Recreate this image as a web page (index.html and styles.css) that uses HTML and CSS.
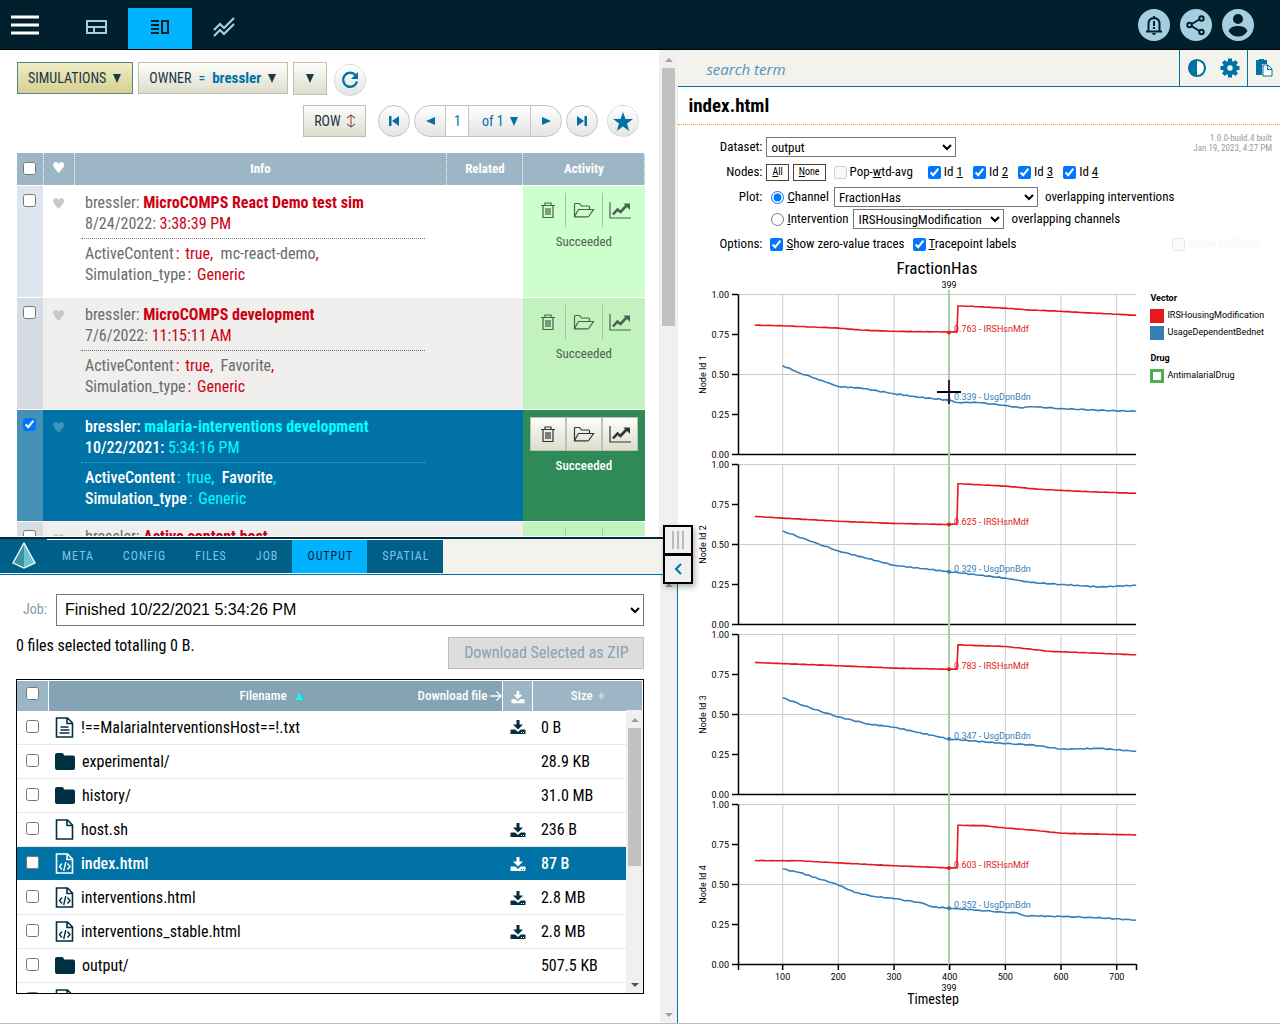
FILE: index.html
```
<!DOCTYPE html>
<html lang="en">
<head>
<meta charset="utf-8">
<title>Simulations</title>
<link rel="stylesheet" href="styles.css">
</head>
<body>
<svg class="sprite" aria-hidden="true">
  <symbol id="i-trash" viewBox="0 0 16 18"><path d="M1 4.500h14M5 4V2h6v2M3 4.500v12h10v-12M6 7v7M8 7v7M10 7v7" fill="none" stroke="currentColor" stroke-width="1.200"/></symbol>
  <symbol id="i-folder" viewBox="0 0 22 16"><path d="M1.500 14.500V2.500q0-1 1-1h4l2 2.500h7q1 0 1 1v2.500M1.500 14.500l4-7h15l-4.500 6.500q-.5.800-1.500.800h-12q-1 0-1-.8z" fill="none" stroke="currentColor" stroke-width="1.200"/></symbol>
  <symbol id="i-trend" viewBox="0 0 22 18"><path d="M1 1v16h21" fill="none" stroke="currentColor" stroke-width="1.200"/><path d="M4 13.500l4.500-5 3 2.500 6-6.500" fill="none" stroke="currentColor" stroke-width="2.600"/><path d="M14.500 2.500H21V9z" fill="currentColor"/></symbol>
  <symbol id="i-down" viewBox="0 0 16 16"><path d="M6.500 1h3v4.500H13L8 10.500 3 5.500h3.500z" fill="currentColor"/><path d="M1 10.500h4.200L8 13l2.800-2.500H15q.5 0 .5.500v3.500q0 .5-.5.500H1q-.5 0-.5-.5V11q0-.5.500-.5zM11 13h1v1h-1zm2 0h1v1h-1z" fill="currentColor" fill-rule="evenodd"/></symbol>
  <symbol id="i-dir" viewBox="0 0 20 17"><path d="M2 0h5q1 0 1.500 1l.6 1.500H18q2 0 2 2V15q0 2-2 2H2q-2 0-2-2V2q0-2 2-2z" fill="currentColor"/></symbol>
  <symbol id="i-file" viewBox="0 0 18 21"><path d="M1 1h11l5 5v14H1zM11.500 1v5.500H17" fill="none" stroke="currentColor" stroke-width="1.600"/></symbol>
  <symbol id="i-text" viewBox="0 0 18 21"><path d="M1 1h11l5 5v14H1zM11.500 1v5.500H17" fill="none" stroke="currentColor" stroke-width="1.600"/><path d="M5 10h8M5 13h9M4 16h10" stroke="currentColor" stroke-width="1.400"/></symbol>
  <symbol id="i-code" viewBox="0 0 18 21"><path d="M1 1h11l5 5v14H1zM11.500 1v5.500H17" fill="none" stroke="currentColor" stroke-width="1.600"/><path d="M6.500 10.500L4 13.500l2.500 3M12 10.500l2.500 3-2.500 3M10.300 9L8.200 18" fill="none" stroke="currentColor" stroke-width="1.400"/></symbol>
</svg>

<header class="topbar">
  <button class="menu" aria-label="Menu"><svg width="28" height="20" viewBox="0 0 28 20"><path d="M0 2h28M0 10h28M0 18h28" stroke="#fff" stroke-width="3"/></svg></button>
  <nav class="views">
    <a href="#" aria-label="Dashboard"><svg width="22" height="16" viewBox="0 0 22 16"><path d="M2 2h19v12H2zM2 8h19M9 8v6" fill="none" stroke="#a5cfe0" stroke-width="2"/></svg></a>
    <a href="#" class="on" aria-label="Split view"><svg width="20" height="16" viewBox="0 0 20 16"><path d="M1 2h8M1 6h8M1 10h8M1 14h8M12 2h6v12h-6z" fill="none" stroke="#00202d" stroke-width="2"/></svg></a>
    <a href="#" aria-label="Charts"><svg width="22" height="20" viewBox="0 0 22 20"><path d="M1 13l6-6 4 4 10-10M1 19l6-6 4 4 10-10" fill="none" stroke="#a5cfe0" stroke-width="2.200"/></svg></a>
  </nav>
  <div class="user">
    <button aria-label="Alerts"><svg width="32" height="32" viewBox="0 0 32 32"><path d="M10.500 21.500v-7q0-5 5.500-5.500 5.500.5 5.500 5.500v7M8 22.500h16M16 7v3" fill="none" stroke="#00202d" stroke-width="2"/><path d="M14 24h4q-.5 2-2 2t-2-2zM15 12h2v5h-2zm0 6h2v2h-2z" fill="#00202d"/></svg></button>
    <button aria-label="Share"><svg width="32" height="32" viewBox="0 0 32 32"><path d="M21 9.500L10 16l11 7" fill="none" stroke="#00202d" stroke-width="2"/><g fill="#a5cfe0" stroke="#00202d" stroke-width="2"><circle cx="21.500" cy="9.500" r="2.200"/><circle cx="9.500" cy="16" r="2.200"/><circle cx="21.500" cy="23" r="2.200"/></g></svg></button>
    <button aria-label="Account"><svg width="32" height="32" viewBox="0 0 32 32"><circle cx="16" cy="10" r="5" fill="#00202d"/><path d="M6.500 22q2-5 9.500-5t9.500 5q-3.500 5.500-9.500 5.500T6.500 22z" fill="#00202d"/></svg></button>
  </div>
</header>

<main class="work">
  <div class="left">
    <section class="sims">
      <div class="sims-body">
        <div class="bar">
          <button class="btn gold">SIMULATIONS <i class="tri"></i></button>
          <button class="btn">OWNER <span class="eq">=</span> <b>bressler</b> <i class="tri"></i></button>
          <button class="btn more" aria-label="More filters"><i class="tri"></i></button>
          <button class="round dashed" aria-label="Refresh"><svg width="18" height="18" viewBox="0 0 18 18"><path d="M14.500 4.200A7 7 0 1 0 16 10.500" fill="none" stroke="#0072a5" stroke-width="2.400"/><path d="M17 1v7h-7z" fill="#0072a5"/></svg></button>
        </div>
        <div class="bar pager">
          <button class="btn row-btn">ROW <svg width="10" height="14" viewBox="0 0 10 14"><path d="M5 1v12" stroke="#a33"/><path d="M1 4l4-3 4 3M1 10l4 3 4-3" fill="none" stroke="#334"/></svg></button>
          <button class="round" aria-label="First page"><svg width="12" height="10" viewBox="0 0 12 10"><path d="M1 0h2.500v10H1zM11 0v10L4 5z" fill="#0072a5"/></svg></button>
          <div class="pages">
            <button aria-label="Previous page"><svg width="9" height="8" viewBox="0 0 9 8"><path d="M9 0v8L0 4z" fill="#0072a5"/></svg></button>
            <input value="1" aria-label="Page">
            <button class="of">of 1 <i class="tri"></i></button>
            <button aria-label="Next page"><svg width="9" height="8" viewBox="0 0 9 8"><path d="M0 0v8l9-4z" fill="#0072a5"/></svg></button>
          </div>
          <button class="round" aria-label="Last page"><svg width="12" height="10" viewBox="0 0 12 10"><path d="M11 0H8.500v10H11zM1 0v10l7-5z" fill="#0072a5"/></svg></button>
          <button class="round dashed star" aria-label="Favorites"><svg width="20" height="19" viewBox="0 0 20 19"><path d="M10 0l2.500 7H20l-6 4.400L16.200 19 10 14.500 3.800 19 6 11.400 0 7h7.500z" fill="#0072a5"/></svg></button>
        </div>
        <table class="list">
          <colgroup><col class="c-check"><col class="c-heart"><col><col class="c-rel"><col class="c-act"></colgroup>
          <thead><tr><th><input type="checkbox" aria-label="Select all"></th><th class="heart">♥</th><th>Info</th><th>Related</th><th>Activity</th></tr></thead>
          <tbody>
            <tr>
              <td><input type="checkbox" aria-label="Select"></td><td class="heart">♥</td>
              <td colspan="2" class="info"><p>bressler: <b>MicroCOMPS React Demo test sim</b><br>8/24/2022: <em>3:38:39 PM</em></p><p class="tags">ActiveContent<em class="colon">:</em> <em>true,</em>  mc-react-demo<em>,</em><br>Simulation_type<em class="colon">:</em> <em>Generic</em></p></td>
              <td class="act"><div class="tools"><button aria-label="Delete"><svg width="16" height="18"><use href="#i-trash"/></svg></button><button aria-label="Open"><svg width="22" height="16"><use href="#i-folder"/></svg></button><button aria-label="Chart"><svg width="22" height="18"><use href="#i-trend"/></svg></button></div>Succeeded</td>
            </tr>
            <tr class="odd">
              <td><input type="checkbox" aria-label="Select"></td><td class="heart">♥</td>
              <td colspan="2" class="info"><p>bressler: <b>MicroCOMPS development</b><br>7/6/2022: <em>11:15:11 AM</em></p><p class="tags">ActiveContent<em class="colon">:</em> <em>true,</em>  Favorite<em>,</em><br>Simulation_type<em class="colon">:</em> <em>Generic</em></p></td>
              <td class="act"><div class="tools"><button aria-label="Delete"><svg width="16" height="18"><use href="#i-trash"/></svg></button><button aria-label="Open"><svg width="22" height="16"><use href="#i-folder"/></svg></button><button aria-label="Chart"><svg width="22" height="18"><use href="#i-trend"/></svg></button></div>Succeeded</td>
            </tr>
            <tr class="sel">
              <td><input type="checkbox" aria-label="Select" checked></td><td class="heart">♥</td>
              <td colspan="2" class="info"><p>bressler: <b>malaria-interventions development</b><br>10/22/2021: <em>5:34:16 PM</em></p><p class="tags">ActiveContent<em class="colon">:</em> <em>true,</em>  Favorite<em>,</em><br>Simulation_type<em class="colon">:</em> <em>Generic</em></p></td>
              <td class="act"><div class="tools"><button aria-label="Delete"><svg width="16" height="18"><use href="#i-trash"/></svg></button><button aria-label="Open"><svg width="22" height="16"><use href="#i-folder"/></svg></button><button aria-label="Chart"><svg width="22" height="18"><use href="#i-trend"/></svg></button></div>Succeeded</td>
            </tr>
            <tr class="odd">
              <td><input type="checkbox" aria-label="Select"></td><td class="heart">♥</td>
              <td colspan="2" class="info"><p>bressler: <b>Active content host</b></p></td>
              <td class="act"><div class="tools"><button aria-label="Delete"><svg width="16" height="18"><use href="#i-trash"/></svg></button><button aria-label="Open"><svg width="22" height="16"><use href="#i-folder"/></svg></button><button aria-label="Chart"><svg width="22" height="18"><use href="#i-trend"/></svg></button></div></td>
            </tr>
          </tbody>
        </table>
      </div>
      <div class="scroll"><i class="up"></i><i class="thumb tall"></i></div>
    </section>

    <nav class="tabs">
      <a href="#" class="logo" aria-label="Home"><svg width="24" height="28" viewBox="0 0 24 28"><path d="M12 1L1 21l11 5z" fill="#3f929d"/><path d="M12 1l11 20-11 5z" fill="#6cc4d2"/><path d="M12 1L1 21l11 5 11-5z" fill="none" stroke="#fff" stroke-width="1.300"/></svg></a>
      <a href="#">META</a><a href="#">CONFIG</a><a href="#">FILES</a><a href="#">JOB</a><a href="#" class="on">OUTPUT</a><a href="#">SPATIAL</a>
    </nav>

    <section class="detail">
      <div class="detail-body">
        <div class="job"><label for="job">Job:</label><select id="job"><option>Finished 10/22/2021 5:34:26 PM</option></select></div>
        <div class="sum"><span>0 files selected totalling 0 B.</span><button disabled>Download Selected as ZIP</button></div>
        <div class="files">
          <table>
            <colgroup><col class="f-check"><col><col class="f-down"><col class="f-size"></colgroup>
            <thead><tr><th><input type="checkbox" aria-label="Select all files"></th><th class="name"><div><span>Filename <i>▲</i></span><span>Download file <svg width="12" height="10" viewBox="0 0 12 10"><path d="M0 5h11M6.500 .5L11 5 6.500 9.500" fill="none" stroke="#fff" stroke-width="1.300"/></svg></span></div></th><th><svg width="14" height="14"><use href="#i-down"/></svg></th><th>Size <i class="dia">♦</i></th></tr></thead>
            <tbody>
              <tr><td><input type="checkbox" aria-label="Select file"></td><td><svg width="19" height="21"><use href="#i-text"/></svg>!==MalariaInterventionsHost==!.txt</td><td><svg width="16" height="16"><use href="#i-down"/></svg></td><td>0 B</td></tr>
              <tr><td><input type="checkbox" aria-label="Select file"></td><td><svg width="20" height="17"><use href="#i-dir"/></svg>experimental/</td><td></td><td>28.9 KB</td></tr>
              <tr><td><input type="checkbox" aria-label="Select file"></td><td><svg width="20" height="17"><use href="#i-dir"/></svg>history/</td><td></td><td>31.0 MB</td></tr>
              <tr><td><input type="checkbox" aria-label="Select file"></td><td><svg width="19" height="21"><use href="#i-file"/></svg>host.sh</td><td><svg width="16" height="16"><use href="#i-down"/></svg></td><td>236 B</td></tr>
              <tr class="sel"><td><input type="checkbox" aria-label="Select file"></td><td><svg width="19" height="21"><use href="#i-code"/></svg>index.html</td><td><svg width="16" height="16"><use href="#i-down"/></svg></td><td>87 B</td></tr>
              <tr><td><input type="checkbox" aria-label="Select file"></td><td><svg width="19" height="21"><use href="#i-code"/></svg>interventions.html</td><td><svg width="16" height="16"><use href="#i-down"/></svg></td><td>2.8 MB</td></tr>
              <tr><td><input type="checkbox" aria-label="Select file"></td><td><svg width="19" height="21"><use href="#i-code"/></svg>interventions_stable.html</td><td><svg width="16" height="16"><use href="#i-down"/></svg></td><td>2.8 MB</td></tr>
              <tr><td><input type="checkbox" aria-label="Select file"></td><td><svg width="20" height="17"><use href="#i-dir"/></svg>output/</td><td></td><td>507.5 KB</td></tr>
              <tr><td><input type="checkbox" aria-label="Select file"></td><td><svg width="19" height="21"><use href="#i-text"/></svg>stderr.txt</td><td><svg width="16" height="16"><use href="#i-down"/></svg></td><td>0 B</td></tr>
            </tbody>
          </table>
          <div class="scroll over"><i class="up"></i><i class="thumb short"></i><i class="down dark"></i></div>
        </div>
      </div>
      <div class="scroll"><i class="up"></i><i class="down"></i></div>
    </section>
    <div class="split"><button aria-label="Drag to resize"><svg width="14" height="18" viewBox="0 0 14 18"><path d="M2 0v18M7 0v18M12 0v18" stroke="#bbb" stroke-width="2"/></svg></button><button aria-label="Collapse"><svg width="8" height="12" viewBox="0 0 8 12"><path d="M7 1L2 6l5 5" fill="none" stroke="#0072a5" stroke-width="2"/></svg></button></div>
  </div>

  <section class="right">
    <div class="search">
      <input type="text" placeholder="search term" aria-label="Search term">
      <div class="icons"><button aria-label="Contrast"><svg width="20" height="20" viewBox="0 0 20 20"><circle cx="10" cy="10" r="8" fill="#fff" stroke="#0072a5" stroke-width="2.200"/><path d="M10 2a8 8 0 0 0 0 16z" fill="#0072a5"/></svg></button><button aria-label="Settings"><svg width="20" height="20" viewBox="0 0 20 20"><circle cx="10" cy="10" r="5" fill="none" stroke="#0072a5" stroke-width="4.500"/><path d="M10 .5v4M10 15.500v4M.5 10h4M15.500 10h4M3.300 3.300l2.500 2.500M14.200 14.200l2.500 2.500M3.300 16.700l2.500-2.500M14.200 5.800l2.500-2.500" stroke="#0072a5" stroke-width="4"/></svg></button></div>
      <div class="icons clip"><button aria-label="Copy"><svg width="18" height="20" viewBox="0 0 18 20"><path d="M1 2h3V1h5v1h3v4H7v11H1z" fill="#0072a5"/><path d="M8 7h5l4 4v7H8zM12.500 7v4.500H17" fill="#fff" stroke="#0072a5"/></svg></button></div>
    </div>
    <h1>index.html</h1>
    <div class="form">
      <p class="build">1.0.0-build.4 built<br>Jan 19, 2023, 4:27 PM</p>
      <div class="line"><label class="lab" for="ds">Dataset:</label><select id="ds" class="w-ds"><option>output</option></select></div>
      <div class="line"><span class="lab">Nodes:</span><button><span><u>A</u>ll</span></button><button><span><u>N</u>one</span></button><label class="pop"><input type="checkbox" disabled><span>Pop-<u>w</u>td-avg</span></label><label class="id"><input type="checkbox" checked><span>Id <u>1</u></span></label><label class="id"><input type="checkbox" checked><span>Id <u>2</u></span></label><label class="id"><input type="checkbox" checked><span>Id <u>3</u></span></label><label class="id"><input type="checkbox" checked><span>Id <u>4</u></span></label></div>
      <div class="line tight"><span class="lab">Plot:</span><label><input type="radio" name="plot" checked><span><u>C</u>hannel</span></label><select class="w-ch" aria-label="Channel"><option>FractionHas</option></select><span>overlapping interventions</span></div>
      <div class="line"><span class="lab"></span><label><input type="radio" name="plot"><span><u>I</u>ntervention</span></label><select class="w-iv" aria-label="Intervention"><option>IRSHousingModification</option></select><span>overlapping channels</span></div>
      <div class="line tight"><span class="lab">Options:</span><label><input type="checkbox" checked><span><u>S</u>how zero-value traces</span></label><label><input type="checkbox" checked><span><u>T</u>racepoint labels</span></label><label class="faint"><input type="checkbox" disabled><span>Show <u>r</u>edlines</span></label></div>
    </div>
    <div class="plot">
      <svg id="chart" width="460" height="750" viewBox="0 0 460 750" role="img" aria-label="FractionHas by timestep"></svg>
      <div class="legend">
        <h2>Vector</h2>
        <p><i class="red"></i>IRSHousingModification</p>
        <p><i class="blue"></i>UsageDependentBednet</p>
        <h2>Drug</h2>
        <p><i class="green"></i>AntimalarialDrug</p>
      </div>
    </div>
  </section>
</main>
<script src="chart.js"></script>
</body>
</html>
```
FILE: chart.js
```
const nodes = [
  { red: [[50,.808],[100,.805],[150,.797],[200,.79],[240,.778],[300,.77],[413,.765],[415,.928],[435,.926],[500,.915],[540,.904],[600,.895],[640,.887],[700,.877],[735,.87]],
    blue: [[100,.555],[130,.51],[160,.475],[200,.425],[240,.415],[300,.38],[340,.36],[399,.339],[415,.325],[450,.325],[500,.307],[525,.293],[550,.298],[600,.287],[680,.275],[735,.27]],
    at: [.763, .339] },
  { red: [[50,.675],[100,.665],[200,.645],[300,.632],[399,.625],[413,.63],[415,.88],[500,.865],[560,.845],[650,.83],[735,.82]],
    blue: [[100,.585],[150,.52],[200,.46],[300,.37],[399,.33],[500,.29],[545,.263],[600,.25],[670,.235],[735,.245]],
    at: [.625, .329] },
  { red: [[50,.825],[200,.805],[300,.79],[399,.783],[413,.783],[415,.935],[500,.925],[580,.895],[735,.873]],
    blue: [[100,.605],[150,.54],[200,.485],[255,.44],[300,.42],[399,.347],[500,.318],[550,.31],[600,.283],[670,.288],[735,.27]],
    at: [.783, .347] },
  { red: [[50,.65],[130,.648],[200,.635],[300,.617],[399,.604],[413,.603],[415,.87],[460,.868],[500,.853],[550,.84],[600,.82],[735,.81]],
    blue: [[100,.597],[130,.575],[170,.53],[195,.505],[230,.45],[265,.425],[300,.412],[350,.385],[370,.36],[399,.352],[450,.34],[500,.325],[520,.323],[535,.305],[600,.3],[650,.295],[735,.278]],
    at: [.603, .352] }
];
const RED = '#e41a1c', BLUE = '#377eb8';
const X = t => 49 + t * 0.5567;
const Y = (n, v) => 38.5 + n * 170 + (1 - v) * 160;
let out = '';
const line = (x1, y1, x2, y2, c, w) => { out += `<line x1="${x1}" y1="${y1}" x2="${x2}" y2="${y2}" stroke="${c}" stroke-width="${w}"/>`; };
const text = (x, y, s, cls, extra = '') => { out += `<text x="${x}" y="${y}" class="${cls}" ${extra}>${s}</text>`; };

// Points are resampled so that the trace has the small steps of a stochastic run.
function trace(n, pts, color, amp) {
  let d = '';
  for (let k = 0; k < pts.length - 1; k++) {
    const [a, va] = pts[k], [b, vb] = pts[k + 1];
    const steps = Math.max(1, Math.round((b - a) / 6));
    for (let s = 0; s < steps; s++) {
      const t = a + (b - a) * s / steps;
      const v = va + (vb - va) * s / steps + (s ? amp * Math.sin(t * 1.7 + n) : 0);
      d += `${d ? 'L' : 'M'}${X(t).toFixed(1)} ${Y(n, v).toFixed(1)}`;
    }
  }
  const [t, v] = pts[pts.length - 1];
  d += `L${X(t).toFixed(1)} ${Y(n, v).toFixed(1)}`;
  out += `<path d="${d}" fill="none" stroke="${color}" stroke-width="1.6"/>`;
}

text(259, 18, 'FractionHas', 'big mid');
text(271, 32, '399', 'tick mid');
nodes.forEach((node, n) => {
  for (let t = 100; t <= 700; t += 100) line(X(t), Y(n, 1), X(t), Y(n, 0), '#ccc', 1);
  line(60, Y(n, 1), 458, Y(n, 1), '#ccc', 1);
  line(60, Y(n, .5), 458, Y(n, .5), '#ccc', 1);
  line(60, Y(n, 0), 458, Y(n, 0), '#000', 1.5);
  line(60.5, Y(n, 1), 60.5, Y(n, 0), '#000', 1.5);
  [1, .75, .5, .25, 0].forEach(v => {
    line(54, Y(n, v), 60, Y(n, v), '#000', 1.5);
    text(51, Y(n, v) + 3, v.toFixed(2), 'tick end');
  });
  text(0, 0, `Node Id ${n + 1}`, 'tick mid', `transform="translate(28 ${Y(n, .5)}) rotate(-90)"`);
});
line(271, 34, 271, 714, '#a9d3a7', 2);
nodes.forEach((node, n) => {
  trace(n, node.red, RED, .001);
  trace(n, node.blue, BLUE, .003);
  [[node.at[0], RED, 'IRSHsnMdf'], [node.at[1], BLUE, 'UsgDpnBdn']].forEach(([v, c, name]) => {
    out += `<circle cx="271" cy="${Y(n, v)}" r="2" fill="${c}"/>`;
    text(276, Y(n, v), `${v.toFixed(3)} - ${name}`, 'tick', `fill="${c}"`);
  });
});
line(60.5, 708, 60.5, 714, '#000', 1.5);
line(458.5, 708, 458.5, 714, '#000', 1.5);
for (let t = 100; t <= 700; t += 100) {
  line(X(t), 708, X(t), 714, '#000', 1.5);
  text(X(t), 724, t, 'tick mid');
}
text(271, 735, '399', 'tick mid');
text(255, 748, 'Timestep', 'axis mid');
line(271, 124, 271, 148, '#3a2140', 2);
line(259, 136, 283, 136, '#000', 2);
document.getElementById('chart').innerHTML = out;
```
FILE: styles.css
```
* { box-sizing: border-box; }
body {
  margin: 0;
  height: 100vh;
  display: flex;
  flex-direction: column;
  overflow: hidden;
  background: #fff;
  border-bottom: 1px solid #b9c0c4;
  font: 16px/21px "Roboto Condensed", "Liberation Sans Narrow", Roboto, sans-serif;
  color: #000;
}
button, input, select { font: inherit; margin: 0; }
button { padding: 0; border: 0; background: none; color: inherit; display: inline-flex; align-items: center; justify-content: center; }
input[type=checkbox], input[type=radio] { width: 13px; height: 13px; flex: none; }
i, em { font-style: normal; }
p { margin: 0; }
a { text-decoration: none; }
.sprite { position: absolute; width: 0; height: 0; }

.topbar { flex: none; height: 50px; display: flex; background: #00202d; border-bottom: 1px solid #000; }
.menu { width: 50px; }
.views { display: flex; margin-left: 14px; padding-top: 8px; }
.views a { width: 64px; display: flex; align-items: center; justify-content: center; padding-bottom: 4px; }
.views .on { background: #00b3ff; }
.user { margin-left: auto; display: flex; align-items: center; gap: 10px; padding-right: 26px; }
.user button { width: 32px; height: 32px; border-radius: 50%; background: #a5cfe0; }

.work { flex: 1; min-height: 0; display: flex; }
.left { flex: 0 0 53%; display: flex; flex-direction: column; position: relative; min-width: 0; }
.sims { flex: 0 0 50%; min-height: 0; display: flex; padding-bottom: 1px; }
.sims-body { flex: 1; padding: 12px 14px 0 17px; overflow: hidden; }

.scroll { flex: 0 0 18px; padding: 4px 3px; background: #f0f0f0; display: flex; flex-direction: column; align-items: center; }
.scroll .up, .scroll .down { border: 4px solid transparent; }
.scroll .up { border-bottom-color: #a0a0a0; border-top: 0; margin: 4px 0 6px; }
.scroll .down { border-top-color: #a0a0a0; border-bottom: 0; margin-top: auto; margin-bottom: 2px; }
.scroll .dark { border-top-color: #505050; }
.thumb { width: 13px; background: #c1c1c1; }
.tall { height: 258px; }
.short { height: 138px; }

.bar { display: flex; gap: 5px; align-items: flex-start; }
.btn {
  height: 32px; padding: 0 11px 0 10px; gap: 7px;
  font-size: 14px; color: #1c3648;
  background: linear-gradient(#fdfdfb, #deddcd); border: 1px solid #bfbfb2;
}
.btn b, .btn .eq { color: #0072a5; }
.btn b { font-size: 15px; }
.tri { border: 4px solid transparent; border-top: 9px solid currentColor; border-bottom: 0; }
.gold { background: linear-gradient(#efedc3, #d6d093); border-color: #5c7f8a; }
.more { width: 34px; height: 33px; padding: 0; }
.round { width: 32px; height: 32px; border-radius: 50%; border: 1px solid #c4c4c4; background: linear-gradient(#fff, #e4e4e4); }
.bar > .dashed { border-style: dotted; margin: 2px 0 0 2px; }
.pager { justify-content: flex-end; gap: 4px; padding: 9px 6px 0 0; }
.pager .row-btn { margin-right: 8px; width: 63px; padding: 0; gap: 5px; }
.pager > .star { margin: 0 0 0 5px; }
.pages { display: flex; width: 148px; height: 32px; border: 1px solid #c4c4c4; border-radius: 16px; overflow: hidden; background: linear-gradient(#fff, #e4e4e4); }
.pages button { flex: 1; color: #0072a5; font-size: 14px; gap: 6px; }
.pages .of { flex: 0 0 62px; border-right: 1px solid #c4c4c4; }
.pages input { width: 24px; border: solid #c4c4c4; border-width: 0 1px; background: #fff; color: #0072a5; font-size: 14px; text-align: center; padding: 0; }

table { border-collapse: collapse; table-layout: fixed; width: 100%; }
td, th { padding: 0; }
.list { margin-top: 16px; }
.c-check { width: 26px; } .c-heart { width: 31px; } .c-rel { width: 76px; } .c-act { width: 122px; }
.list th { height: 32px; background: #9cb6c5; color: #fff; font-size: 13px; font-weight: 700; border-right: 1px dotted #fff; border-bottom: 1px solid #fff; }
.list input { display: block; margin: 0 auto; }
.list td { height: 112px; vertical-align: top; border-bottom: 1px solid #fff; color: #6b6b6b; }
.list td:first-child { background: #dde6ee; padding: 8px 1px 0 0; }
.heart { font-family: "DejaVu Sans", sans-serif; text-align: center; }
.list .heart { font-size: 15px; }
.list td.heart { color: #c8c8c8; padding-top: 8px; }
.info p { margin-right: 98px; margin-left: 7px; padding: 6px 0 4px 4px; border-bottom: 1px dotted #777; }
.info p:last-child { border: 0; padding-top: 4px; white-space: pre-wrap; }
.info b, .info em { color: #cc0011; }
.info .colon { margin: 0 2px; }
.list .act { background: #ccffcc; text-align: center; font-size: 13px; padding: 7px 7px 0; color: #4d6350; }
.tools { display: flex; height: 34px; margin-bottom: 4px; color: #4b604e; }
.tools button { flex: 1; border-right: 1px solid #9fc49f; }
.tools button:last-child { border: 0; }
.odd td { background: #f0efee; }
.list .odd td:first-child { background: #d5dce4; }
.list .odd .act { background: #c2f3be; }
.list .sel td { background: #0072a5; color: #fff; font-weight: 500; }
.list .sel td:first-child { background: #4590b7; }
.list .sel .heart { color: #3c94bb; }
.list .sel .act { background: #2e8b57; }
.sel .info p { border-color: #3bb3e8; }
.list .sel .info b, .list .sel .info em { color: #00ffff; }
.sel .info em { font-weight: 400; }
.sel .tools { color: #333; background: linear-gradient(#fdfdfb, #deddcd); border: 1px solid #bfbfb2; }
.sel .tools button { border-width: 0 2px 0 0; border-color: #bfbfb2; }

.tabs { flex: none; height: 38px; display: flex; background: #f3f3ee; border-top: 2px solid #002b3d; border-bottom: 1px solid #0072a5; padding-bottom: 1px; }
.tabs a { display: flex; align-items: center; padding: 0 14px 0 15px; border-top: 1px solid #fff; background: #005f86; color: #7cc4ee; font-size: 12px; letter-spacing: 1px; }
.tabs .logo { padding: 0 11px 0 12px; border: 0; }
.tabs .on { background: #00b3ff; color: #00202d; }

.detail { flex: 1; min-height: 0; display: flex; border-right: 1px solid #0072a5; }
.detail-body { flex: 1; min-width: 0; padding: 19px 16px 29px; display: flex; flex-direction: column; }
.detail > .scroll { flex-basis: 17px; }
.job { display: flex; align-items: center; gap: 9px; padding-left: 7px; }
.job label { color: #7f9cae; font-size: 14px; }
.job select { flex: 1; height: 32px; border: 1px solid #767676; background: #fff; font: 16px "Liberation Sans", sans-serif; padding: 0 4px; color: #000; }
.sum { display: flex; justify-content: space-between; margin: 9px 0 10px; }
.sum button { width: 196px; height: 32px; background: #ddd; border: 1px solid #bbb; color: #86a2b4; margin-top: 2px; }
.files { flex: 1; min-height: 0; border: 1px solid #000; position: relative; overflow: hidden; padding: 1px 0 0; }
.over { position: absolute; right: 0; top: 30px; bottom: 0; width: 17px; }
.f-check { width: 31px; } .f-down { width: 30px; } .f-size { width: 110px; }
.files th { height: 30px; background: #9cb6c5; color: #fff; font-size: 13px; font-weight: 500; border-right: 1px solid #fff; }
.files .name { background: #84a3b5; }
.name div { display: flex; justify-content: flex-end; gap: 112px; }
.name i { color: #00ffff; font-size: 12px; margin-left: 4px; }
.files th svg { vertical-align: middle; }
.dia { color: #c6d5df; font-size: 14px; margin-left: 2px; }
.files td { height: 34px; border-bottom: 1px solid #e8e8e8; white-space: nowrap; }
.files td svg { color: #002f42; vertical-align: middle; }
.files td:first-child { text-align: center; }
.files td:nth-child(3) svg { display: block; margin: 0 auto; }
.files td:nth-child(2) { padding-left: 7px; }
.files td:nth-child(2) svg { margin: -2px 7px 0 0; }
.files td:nth-child(4) { padding-left: 8px; }
.files .sel td { background: #0072a5; color: #fff; font-weight: 500; border-color: #fff; }
.files .sel td svg { color: #fff; }

.split { position: absolute; right: -15px; top: 475px; z-index: 2; width: 30px; box-shadow: 2px 3px 6px rgba(0,0,0,.3); }
.split button { width: 30px; height: 30px; background: #f0f0f0; border: 2px solid #000; }
.split button + button { height: 29px; border-top-width: 1px; }

.right { flex: 1; min-width: 0; display: flex; flex-direction: column; }
.search { flex: none; height: 37px; display: flex; background: #f3f3ee; border-bottom: 1px solid #0072a5; }
.search input { flex: 1; border: 0; background: none; padding: 2px 28px 0; font: italic 15px "Open Sans", sans-serif; }
.search input::placeholder { color: #5590bd; }
.icons { display: flex; align-items: center; gap: 13px; padding: 0 7px; border-left: 1px solid #0072a5; }
h1 { margin: 0; padding: 8px 10px; font-size: 19px; line-height: 21px; font-weight: 700; border-bottom: 1px dotted #f0a500; }
.form { position: relative; padding: 12px 20px 0 0; font-size: 13px; line-height: 18px; }
.build { position: absolute; right: 8px; top: 8px; text-align: right; color: #999; font-size: 9px; line-height: 10px; }
.line { display: flex; align-items: center; height: 20px; margin-bottom: 5px; gap: 4px; }
.lab { width: 84px; text-align: right; }
.line label:not(.lab) { display: flex; align-items: center; gap: 3px; margin-left: 4px; white-space: nowrap; }
.line input[type=radio] { margin-left: 1px; }
.line select { height: 20px; border: 1px solid #767676; background: #fff; color: #000; padding: 0; }
.line button { height: 17px; padding: 0 5px; font-size: 10px; border: 1px solid #444; }
.line .pop:not(.lab) { margin-right: 5px; }
.line .id:not(.lab) { margin-left: 6px; }
.line label:not(.lab) + select { margin-left: 1px; }
.line select + span { margin-left: 3px; }
.line .faint:not(.lab) { margin-left: auto; color: #eee; opacity: .5; }
.w-ds { width: 190px; } .w-ch { width: 204px; } .w-iv { width: 151px; }
.line.tight { margin-bottom: 2px; }
.plot { display: flex; align-items: flex-start; gap: 12px; }
#chart { flex: none; }
.mid { text-anchor: middle; }
.end { text-anchor: end; }
.big { font-size: 17px; }
.axis { font-size: 14px; }
.tick { font-size: 9px; font-family: Roboto, sans-serif; }
.legend { padding-top: 35px; font: 9px/17px Roboto, sans-serif; }
.legend h2 { margin: 0 0 2px; font-size: 9px; line-height: 14px; }
.legend p + h2 { margin-top: 10px; }
.legend p { display: flex; align-items: center; gap: 3px; }
.legend p i { width: 14px; height: 14px; }
.red { background: #e41a1c; } .blue { background: #377eb8; } .green { border: 3px solid #4daf4a; }
```
